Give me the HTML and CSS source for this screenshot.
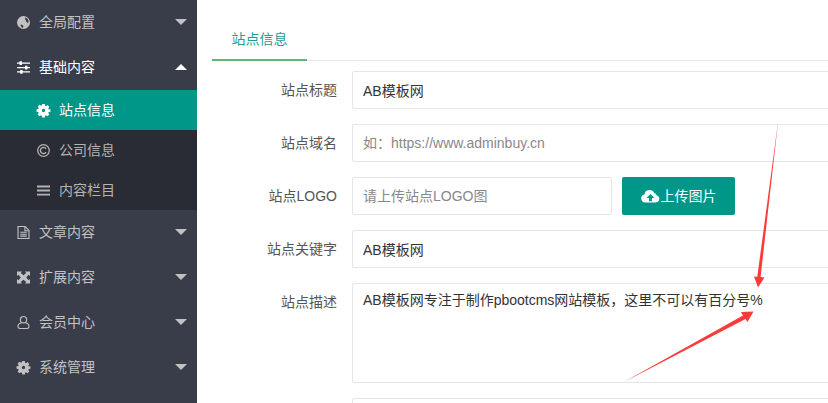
FILE: index.html
```html
<!DOCTYPE html>
<html lang="zh-CN">
<head>
<meta charset="utf-8">
<title>站点信息</title>
<link rel="stylesheet" href="styles.css">
</head>
<body>
<div class="app">
  <aside class="side">
    <a class="nav"><svg class="ico" viewBox="0 0 13 13"><path d="M6.500 0a6.500 6.500 0 1 0 0 13 6.500 6.500 0 0 0 0-13zM8.300 1.200l2.200 1.500 1.200 2.400-.6 1.800-1.300-.4-.7-1.700-1-1.300zM3.800 8.500l1.700.6 1 1.400-.6 1.200-1.400-.4-1-1.700z" fill-rule="evenodd"/></svg><span>全局配置</span><i class="car"></i></a>
    <a class="nav open"><svg class="ico" viewBox="0 0 13 13"><path d="M0 1.500h13v1.300H0zM0 5.900h13v1.300H0zM0 10.300h13v1.300H0z"/><path d="M2.500.3h2.400v3.700H2.500zM8 4.700h2.400v3.700H8zM3.200 9.100h2.400v3.700H3.200z"/></svg><span>基础内容</span><i class="car up"></i></a>
    <div class="sub">
      <a class="item on"><svg class="ico" viewBox="0 0 14 14"><path d="M5.600 0h2.800l.3 1.900 1 .4 1.600-1.100 2 2-1.100 1.600.4 1L14.500 5.600v2.800l-1.900.3-.4 1 1.100 1.600-2 2-1.600-1.100-1 .4-.3 1.900H5.600l-.3-1.900-1-.4-1.600 1.100-2-2 1.100-1.600-.4-1L-.5 8.400V5.600l1.900-.3.4-1L.7 2.700l2-2 1.600 1.100 1-.4zM7 5.200a1.800 1.800 0 1 0 0 3.600 1.800 1.800 0 0 0 0-3.600z" fill-rule="evenodd"/></svg><span>站点信息</span></a>
      <a class="item"><svg class="ico" viewBox="0 0 13 13"><circle cx="6.500" cy="6.500" r="5.800" fill="none" stroke="currentColor" stroke-width="1.300"/><path d="M9.100 8.200A3.100 3.100 0 1 1 9.100 4.800" fill="none" stroke="currentColor" stroke-width="1.400"/></svg><span>公司信息</span></a>
      <a class="item"><svg class="ico" viewBox="0 0 13 13"><path d="M0 1.500h13v1.900H0zM0 5.600h13v1.900H0zM0 9.700h13v1.900H0z"/></svg><span>内容栏目</span></a>
    </div>
    <a class="nav"><svg class="ico" viewBox="0 0 13 14"><path d="M.6.6h7.600l4.200 4.200v8.600H.6z" fill="none" stroke="currentColor" stroke-width="1.200"/><path d="M8 .8v4.200h4.200M3 6.700h7M3 8.800h7M3 10.900h7" fill="none" stroke="currentColor" stroke-width="1.100"/></svg><span>文章内容</span><i class="car"></i></a>
    <a class="nav"><svg class="ico" viewBox="0 0 14 13"><path d="M0 0h5.500L4 1.600l3 2.600 3-2.600L8.500 0H14v5l-1.600-1.500L10 6.500l2.400 3L14 8v5H8.500L10 11.400 7 8.800l-3 2.600L5.500 13H0V8l1.600 1.500L4 6.500l-2.400-3L0 5z"/><path d="M5.800 5.500h2.400v2H5.800z"/></svg><span>扩展内容</span><i class="car"></i></a>
    <a class="nav"><svg class="ico" viewBox="0 0 13 14"><circle cx="6.500" cy="4" r="3.400" fill="none" stroke="currentColor" stroke-width="1.200"/><path d="M4.500 7.200C2.200 7.700.6 9 .6 11c0 1.600.7 2.400 2 2.400h7.800c1.300 0 2-.8 2-2.400 0-2-1.600-3.300-3.900-3.800" fill="none" stroke="currentColor" stroke-width="1.200"/></svg><span>会员中心</span><i class="car"></i></a>
    <a class="nav"><svg class="ico" viewBox="0 0 14 14"><path d="M5.600 0h2.800l.3 1.900 1 .4 1.600-1.100 2 2-1.100 1.600.4 1L14.500 5.600v2.800l-1.900.3-.4 1 1.100 1.600-2 2-1.600-1.100-1 .4-.3 1.900H5.600l-.3-1.900-1-.4-1.600 1.100-2-2 1.100-1.600-.4-1L-.5 8.400V5.600l1.900-.3.4-1L.7 2.700l2-2 1.600 1.100 1-.4zM7 5.200a1.800 1.800 0 1 0 0 3.600 1.800 1.800 0 0 0 0-3.600z" fill-rule="evenodd"/></svg><span>系统管理</span><i class="car"></i></a>
  </aside>
  <main class="main">
    <div class="tabs"><span class="tab">站点信息</span></div>
    <form class="form">
      <div class="row"><label class="lab">站点标题</label><input class="inp" value="AB模板网"></div>
      <div class="row"><label class="lab">站点域名</label><input class="inp" placeholder="如：https://www.adminbuy.cn"></div>
      <div class="row"><label class="lab">站点LOGO</label><input class="inp short" placeholder="请上传站点LOGO图"><button class="btn" type="button"><svg class="cloud" viewBox="0 0 20 14"><path d="M16.200 6.100A3.900 3.900 0 0 1 15.500 13.800H4.500A4.300 4.300 0 0 1 3.600 5.300 5.500 5.500 0 0 1 14 3.800a3 3 0 0 1 2.200 2.300zM10 4.800 5.800 9h2.700v3.500h3V9h2.700z" fill-rule="evenodd"/></svg>上传图片</button></div>
      <div class="row"><label class="lab">站点关键字</label><input class="inp" value="AB模板网"></div>
      <div class="row"><label class="lab">站点描述</label><textarea class="inp area">AB模板网专注于制作pbootcms网站模板，这里不可以有百分号%</textarea></div>
      <div class="row"><input class="inp offset"></div>
    </form>
  </main>
</div>
<svg class="arrows" viewBox="0 0 828 403"><path d="M778.300 120 L760.600 277 L764.500 277.500 L758 287.500 L754 276.500 L757.300 276.800 Z"/><path d="M623 382.500 L745.500 319 L747.500 322 L753.500 311.500 L741 312 L743 315.500 Z"/></svg>
</body>
</html>
```
FILE: styles.css
```css
* { box-sizing: border-box; }
html, body { margin: 0; height: 100%; overflow: hidden; background: #fff; }
body { font: 14px/20px "Liberation Sans", "Noto Sans CJK SC", sans-serif; color: #333; }
.app { display: flex; height: 403px; overflow: hidden; }

.side { width: 197px; flex: none; background: #393d49; color: #c2c2c2; overflow: hidden; }
.nav { display: flex; align-items: center; height: 45px; padding: 0 10px 1px 17px; }
.nav.open { color: #fff; }
.nav span { margin-left: 9px; flex: 1; }
.ico { width: 13px; height: 13px; fill: currentColor; flex: none; overflow: visible; }
.car { width: 0; height: 0; border: 6px solid transparent; border-top: 6px solid #c2c2c2; border-bottom: 0; }
.car.up { border-top: 0; border-bottom: 6px solid #fff; }
.sub { background: #2a2c35; }
.item { display: flex; align-items: center; height: 40px; padding-left: 37px; color: #b3b3b3; }
.item span { margin-left: 9px; }
.item.on { background: #009688; color: #fff; }

.main { flex: 1; min-width: 0; overflow: hidden; padding: 20px 0 0 15px; }
.tabs { height: 41px; border-bottom: 1px solid #e6e6e6; }
.tab { display: block; width: 95px; height: 41px; padding-top: 9px; text-align: center; color: #1aa094; border-bottom: 2px solid #5fb878; }

.form { padding-top: 10px; }
.row { display: flex; align-items: flex-start; margin-bottom: 15px; }
.lab { width: 125px; flex: none; padding-top: 9px; text-align: right; color: #555; }
.inp { display: block; width: 520px; flex: none; height: 38px; margin: 0 0 0 15px; padding: 0 10px; border: 1px solid #e6e6e6; border-radius: 2px; background: #fff; font: inherit; color: #333; outline: none; }
.inp::placeholder { color: #888; opacity: 1; }
.short { width: 260px; }
.area { height: 100px; padding: 6px 10px; resize: none; overflow: hidden; }
.offset { margin-left: 140px; }
.btn { display: flex; align-items: center; justify-content: center; width: 113px; height: 38px; margin-left: 10px; padding: 0; border: 0; border-radius: 2px; background: #009688; color: #fff; font: inherit; }
.cloud { width: 19px; height: 14px; fill: #fff; margin-right: 1px; }

.arrows { position: absolute; left: 0; top: 0; width: 828px; height: 403px; fill: #fb3a3a; pointer-events: none; }
```
